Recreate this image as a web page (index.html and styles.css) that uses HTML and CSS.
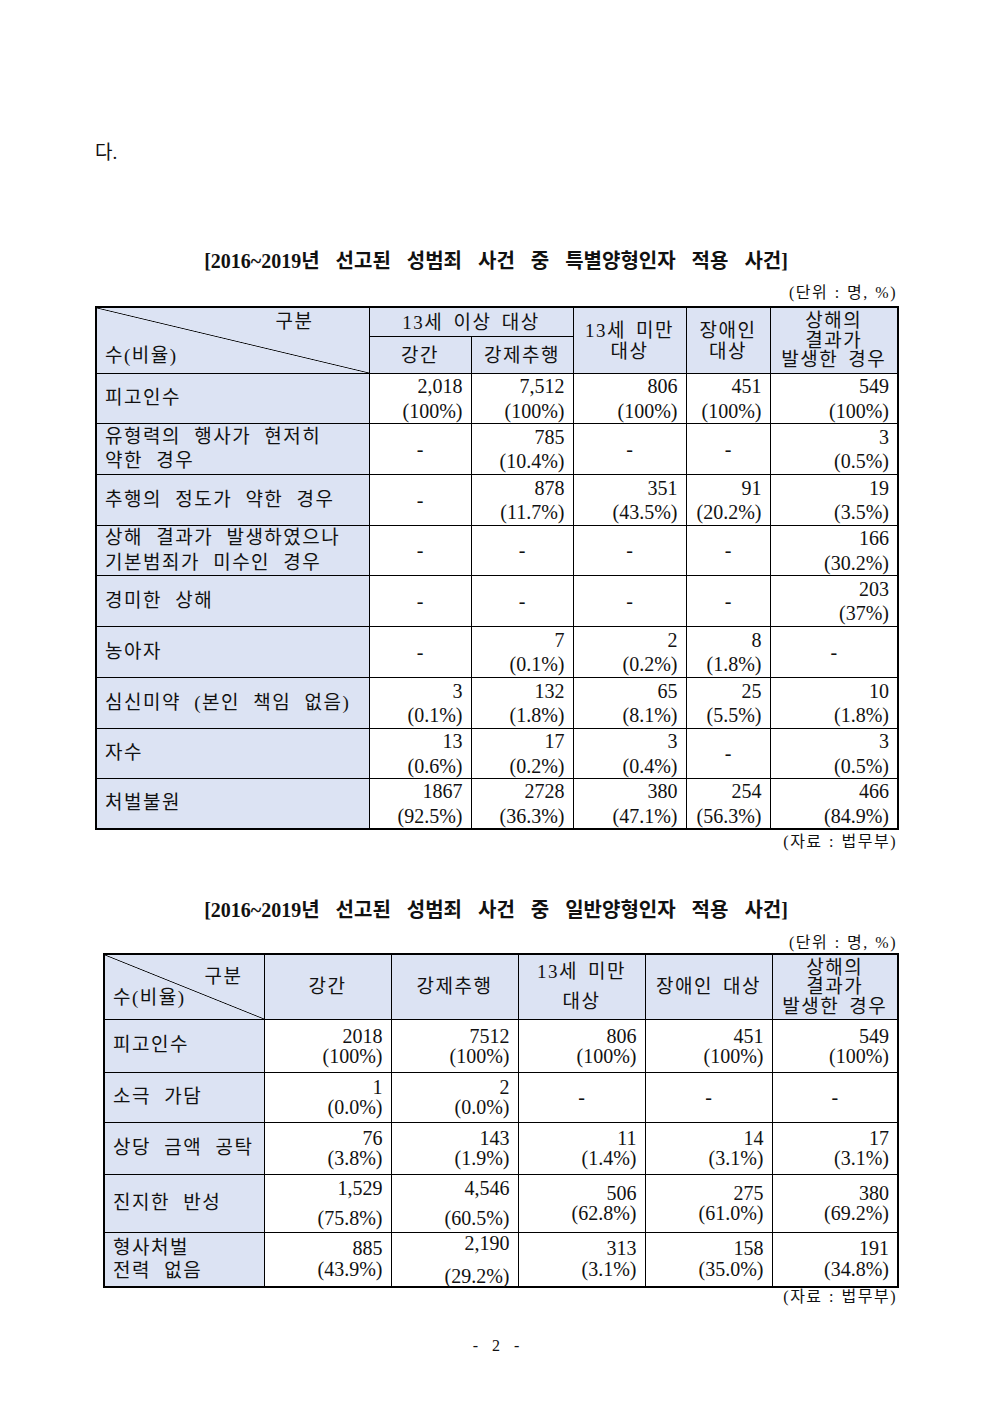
FILE: index.html
```html
<!DOCTYPE html>
<html lang="ko">
<head>
<meta charset="utf-8">
<title>성범죄 양형인자 적용 사건</title>
<link rel="stylesheet" href="styles.css">
</head>
<body>
<div class="page">
  <p class="lead">다.</p>

  <h2 class="title">[2016~2019년 선고된 성범죄 사건 중 특별양형인자 적용 사건]</h2>
  <p class="unit">(단위 : 명, %)</p>
  <table class="t1">
    <colgroup>
      <col class="c1a"><col class="c1b"><col class="c1c"><col class="c1d"><col class="c1e"><col class="c1f">
    </colgroup>
    <tr class="h1a">
      <th rowspan="2" class="diag"><div class="diagbox1"><span class="g1">구분</span><span class="s1">수(비율)</span></div></th>
      <th colspan="2">13세 이상 대상</th>
      <th rowspan="2" class="lh21">13세 미만<br>대상</th>
      <th rowspan="2" class="lh21">장애인<br>대상</th>
      <th rowspan="2" class="lh19">상해의<br>결과가<br>발생한 경우</th>
    </tr>
    <tr class="h1b">
      <th>강간</th>
      <th>강제추행</th>
    </tr>
    <tr class="r50">
      <td class="lbl">피고인수</td>
      <td class="n">2,018<br>(100%)</td>
      <td class="n">7,512<br>(100%)</td>
      <td class="n">806<br>(100%)</td>
      <td class="n">451<br>(100%)</td>
      <td class="n">549<br>(100%)</td>
    </tr>
    <tr class="r51">
      <td class="lbl">유형력의 행사가 현저히<br>약한 경우</td>
      <td class="d">-</td>
      <td class="n">785<br>(10.4%)</td>
      <td class="d">-</td>
      <td class="d">-</td>
      <td class="n">3<br>(0.5%)</td>
    </tr>
    <tr class="r51">
      <td class="lbl">추행의 정도가 약한 경우</td>
      <td class="d">-</td>
      <td class="n">878<br>(11.7%)</td>
      <td class="n">351<br>(43.5%)</td>
      <td class="n">91<br>(20.2%)</td>
      <td class="n">19<br>(3.5%)</td>
    </tr>
    <tr class="r50">
      <td class="lbl">상해 결과가 발생하였으나<br>기본범죄가 미수인 경우</td>
      <td class="d">-</td>
      <td class="d">-</td>
      <td class="d">-</td>
      <td class="d">-</td>
      <td class="n">166<br>(30.2%)</td>
    </tr>
    <tr class="r51">
      <td class="lbl">경미한 상해</td>
      <td class="d">-</td>
      <td class="d">-</td>
      <td class="d">-</td>
      <td class="d">-</td>
      <td class="n">203<br>(37%)</td>
    </tr>
    <tr class="r51">
      <td class="lbl">농아자</td>
      <td class="d">-</td>
      <td class="n">7<br>(0.1%)</td>
      <td class="n">2<br>(0.2%)</td>
      <td class="n">8<br>(1.8%)</td>
      <td class="d">-</td>
    </tr>
    <tr class="r51">
      <td class="lbl">심신미약 (본인 책임 없음)</td>
      <td class="n">3<br>(0.1%)</td>
      <td class="n">132<br>(1.8%)</td>
      <td class="n">65<br>(8.1%)</td>
      <td class="n">25<br>(5.5%)</td>
      <td class="n">10<br>(1.8%)</td>
    </tr>
    <tr class="r50">
      <td class="lbl">자수</td>
      <td class="n">13<br>(0.6%)</td>
      <td class="n">17<br>(0.2%)</td>
      <td class="n">3<br>(0.4%)</td>
      <td class="d">-</td>
      <td class="n">3<br>(0.5%)</td>
    </tr>
    <tr class="r50">
      <td class="lbl">처벌불원</td>
      <td class="n">1867<br>(92.5%)</td>
      <td class="n">2728<br>(36.3%)</td>
      <td class="n">380<br>(47.1%)</td>
      <td class="n">254<br>(56.3%)</td>
      <td class="n">466<br>(84.9%)</td>
    </tr>
  </table>
  <p class="src">(자료 : 법무부)</p>

  <h2 class="title title2">[2016~2019년 선고된 성범죄 사건 중 일반양형인자 적용 사건]</h2>
  <p class="unit unit2">(단위 : 명, %)</p>
  <table class="t2">
    <colgroup>
      <col class="c2a"><col class="c2b"><col class="c2b"><col class="c2b"><col class="c2b"><col class="c2f">
    </colgroup>
    <tr class="h2">
      <th class="diag"><div class="diagbox2"><span class="g2">구분</span><span class="s2">수(비율)</span></div></th>
      <th>강간</th>
      <th>강제추행</th>
      <th class="lh30">13세 미만<br>대상</th>
      <th>장애인 대상</th>
      <th class="lh19">상해의<br>결과가<br>발생한 경우</th>
    </tr>
    <tr class="r2a">
      <td class="lbl">피고인수</td>
      <td class="n n2">2018<br>(100%)</td>
      <td class="n n2">7512<br>(100%)</td>
      <td class="n n2">806<br>(100%)</td>
      <td class="n n2">451<br>(100%)</td>
      <td class="n n2">549<br>(100%)</td>
    </tr>
    <tr class="r2b">
      <td class="lbl">소극 가담</td>
      <td class="n n2">1<br>(0.0%)</td>
      <td class="n n2">2<br>(0.0%)</td>
      <td class="d">-</td>
      <td class="d">-</td>
      <td class="d">-</td>
    </tr>
    <tr class="r2c">
      <td class="lbl">상당 금액 공탁</td>
      <td class="n n2">76<br>(3.8%)</td>
      <td class="n n2">143<br>(1.9%)</td>
      <td class="n n2">11<br>(1.4%)</td>
      <td class="n n2">14<br>(3.1%)</td>
      <td class="n n2">17<br>(3.1%)</td>
    </tr>
    <tr class="r2d">
      <td class="lbl">진지한 반성</td>
      <td class="n n2"><div>1,529</div><div class="gap10">(75.8%)</div></td>
      <td class="n n2"><div>4,546</div><div class="gap10">(60.5%)</div></td>
      <td class="n n2">506<br>(62.8%)</td>
      <td class="n n2">275<br>(61.0%)</td>
      <td class="n n2">380<br>(69.2%)</td>
    </tr>
    <tr class="r2e">
      <td class="lbl lh23">형사처벌<br>전력 없음</td>
      <td class="n n21">885<br>(43.9%)</td>
      <td class="n n2"><div>2,190</div><div class="gap13">(29.2%)</div></td>
      <td class="n n21">313<br>(3.1%)</td>
      <td class="n n21">158<br>(35.0%)</td>
      <td class="n n21">191<br>(34.8%)</td>
    </tr>
  </table>
  <p class="src src2">(자료 : 법무부)</p>

  <p class="pagenum">- 2 -</p>
</div>
</body>
</html>
```

FILE: styles.css
```css
html, body {
  margin: 0;
  padding: 0;
  background: #fff;
}
body {
  font-family: "Liberation Serif", "Noto Sans CJK KR", serif;
  color: #111;
}
.page {
  width: 802px;
  margin-left: 95px;
  padding-top: 140px;
}
p, h2 {
  margin: 0;
}
.lead {
  font-size: 19px;
  line-height: 25px;
  height: 25px;
}
.title {
  margin-top: 84px;
  text-align: center;
  font-size: 20px;
  font-weight: 700;
  line-height: 24px;
  word-spacing: 11px;
}
.title2 {
  margin-top: 47px;
}
.unit {
  margin-top: 11px;
  text-align: right;
  font-size: 16px;
  line-height: 18px;
  letter-spacing: 1.5px;
  word-spacing: 1px;
}
.unit2 {
  margin-top: 12px;
}
.src {
  margin-top: 3px;
  text-align: right;
  font-size: 16px;
  line-height: 18px;
  letter-spacing: 1.5px;
  word-spacing: 1px;
}
.src2 {
  margin-top: 0;
}
.pagenum {
  margin-top: 31px;
  text-align: center;
  font-size: 16px;
  line-height: 18px;
  word-spacing: 10px;
}

table {
  border-collapse: collapse;
  table-layout: fixed;
  border: 2px solid #000;
}
.t1 {
  width: 802px;
  margin-top: 4px;
}
.t2 {
  width: 794px;
  margin-top: 1px;
  margin-left: 8px;
}
.c1a { width: 273px; }
.c1b { width: 102px; }
.c1c { width: 102px; }
.c1d { width: 113px; }
.c1e { width: 84px; }
.c1f { width: 128px; }
.c2a { width: 160px; }
.c2b { width: 127px; }
.c2f { width: 126px; }

th, td {
  border: 1px solid #000;
  padding: 0 8px;
  vertical-align: middle;
}
th {
  background: #dce3f3;
  font-weight: 400;
  font-size: 19px;
  line-height: 25px;
  text-align: center;
  letter-spacing: 1.5px;
  word-spacing: 4px;
  padding: 0 3px;
}
.h1a { height: 29px; }
.h1b { height: 36px; }
.h2 { height: 65px; }
.r50 { height: 50px; }
.r51 { height: 51px; }
.r2a { height: 53px; }
.r2b { height: 50px; }
.r2c { height: 52px; }
.r2d { height: 58px; }
.r2e { height: 55px; }

.lh21 { line-height: 21px; }
.lh19 { line-height: 19.5px; }
.lh30 { line-height: 30px; }

.diag {
  padding: 0 8px;
  text-align: left;
  background: linear-gradient(to top right, transparent calc(50% - 0.8px), #000 50%, transparent calc(50% + 0.8px)), #dce3f3;
}
.diagbox1 {
  height: 65px;
  display: flex;
  flex-direction: column;
  justify-content: space-between;
}
.g1 {
  margin-top: 1px;
  text-align: right;
  padding-right: 47px;
}
.s1 {
  margin-bottom: 5px;
}
.diagbox2 {
  height: 63px;
  display: flex;
  flex-direction: column;
  justify-content: center;
  line-height: 21px;
}
.g2 {
  text-align: right;
  padding-right: 13px;
}

.lbl {
  background: #dce3f3;
  font-size: 19px;
  line-height: 24.5px;
  letter-spacing: 1.5px;
  word-spacing: 7px;
  text-align: left;
}
.lh23 { line-height: 23px; }
.n {
  text-align: right;
  font-size: 20px;
  line-height: 24.5px;
}
.n2 { line-height: 20px; }
.n21 { line-height: 21px; }
.gap10 { margin-top: 10px; }
.gap13 { margin-top: 13px; }
.d {
  text-align: center;
  font-size: 20px;
  line-height: 24.5px;
}
```
